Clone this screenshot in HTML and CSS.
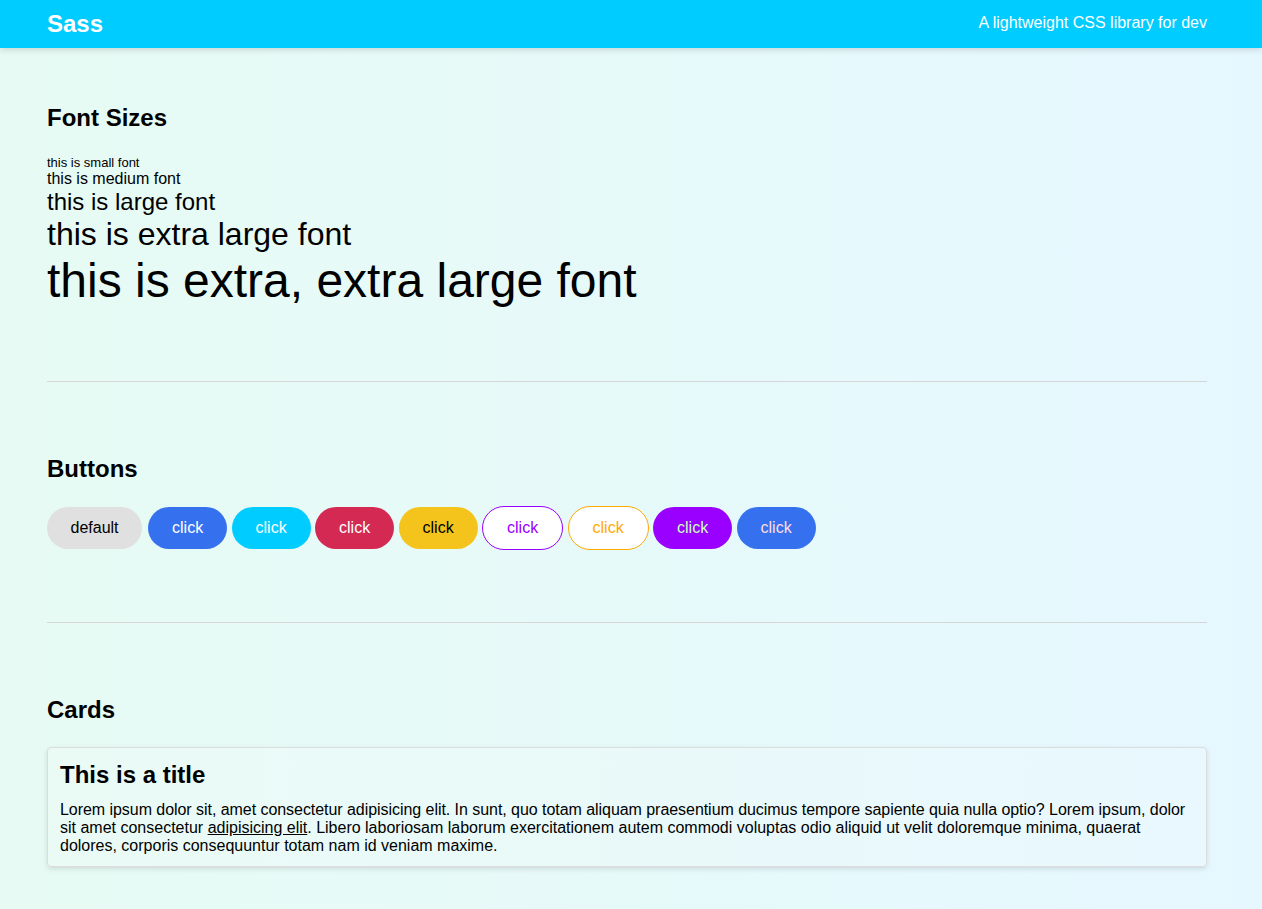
FILE: index.html
```html
<!DOCTYPE html>
<html lang="en">
<head>
<meta charset="utf-8">
<title>Sass</title>
<link rel="stylesheet" href="styles.css">
</head>
<body>
<header class="topbar">
  <div class="container topbar-inner">
    <div class="brand">Sass</div>
    <div class="tagline">A lightweight CSS library for dev</div>
  </div>
</header>
<main class="container">
  <section class="section section-first">
    <h2 class="section-title">Font Sizes</h2>
    <p class="fs fs-sm">this is small font</p>
    <p class="fs fs-md">this is medium font</p>
    <p class="fs fs-lg">this is large font</p>
    <p class="fs fs-xl">this is extra large font</p>
    <p class="fs fs-xxl">this is extra, extra large font</p>
  </section>
  <hr class="divider">
  <section class="section">
    <h2 class="section-title">Buttons</h2>
    <div class="btn-row">
      <button class="btn btn-default">default</button>
      <button class="btn btn-blue">click</button>
      <button class="btn btn-cyan">click</button>
      <button class="btn btn-red">click</button>
      <button class="btn btn-yellow">click</button>
      <button class="btn btn-outline btn-outline-purple">click</button>
      <button class="btn btn-outline btn-outline-orange">click</button>
      <button class="btn btn-purple">click</button>
      <button class="btn btn-blue btn-pinktext">click</button>
    </div>
  </section>
  <hr class="divider">
  <section class="section section-last">
    <h2 class="section-title">Cards</h2>
    <div class="card">
      <h3 class="card-title">This is a title</h3>
      <p class="card-text">Lorem ipsum dolor sit, amet consectetur adipisicing elit. In sunt, quo totam aliquam praesentium ducimus tempore sapiente quia nulla optio? Lorem ipsum, dolor sit amet consectetur <u>adipisicing elit</u>. Libero laboriosam laborum exercitationem autem commodi voluptas odio aliquid ut velit doloremque minima, quaerat dolores, corporis consequuntur totam nam id veniam maxime.</p>
    </div>
  </section>
</main>
</body>
</html>
```
FILE: styles.css
```css
* { box-sizing: border-box; }
html, body { margin: 0; padding: 0; }
body {
  font-family: "Liberation Sans", Arial, sans-serif;
  color: #000;
  min-height: 909px;
  background: linear-gradient(90deg, #e7fbf4 0%, #e6f8ff 100%);
}
.container {
  width: 1160px;
  margin-left: 47px;
}
.topbar {
  background: #00ccff;
  height: 48px;
  box-shadow: 0 2px 6px rgba(0, 0, 0, 0.14);
  position: relative;
}
.topbar-inner {
  height: 48px;
  display: flex;
  align-items: center;
  justify-content: space-between;
}
.brand {
  color: #fff;
  font-weight: bold;
  font-size: 24px;
  margin-top: -1px;
}
.tagline {
  color: #fff;
  font-size: 16px;
  margin-top: -2px;
}
.section { padding: 72px 0 72px; }
.section-first { padding-top: 55px; padding-bottom: 73px; }
.section-title {
  margin: 1px 0 23px;
  font-size: 24px;
  line-height: 28px;
  font-weight: bold;
}
.fs { margin: 0; line-height: normal; }
.fs-sm { font-size: 13px; }
.fs-md { font-size: 16px; }
.fs-lg { font-size: 24px; }
.fs-xl { font-size: 32px; }
.fs-xxl { font-size: 48px; }
.divider {
  margin: 0;
  border: 0;
  border-top: 1px solid #d6d6d6;
}
.btn-row {
  display: flex;
  align-items: center;
  gap: 4.4px;
}
.btn {
  display: block;
  font-family: "Liberation Sans", Arial, sans-serif;
  font-size: 16px;
  padding: 0 24px;
  border-radius: 21px;
  border: 0;
  margin: 0;
  cursor: pointer;
  box-sizing: content-box;
  height: 42px;
}
.btn-default { background: #e0e0e0; color: #000; margin-right: 1.6px; padding: 0 23.5px; }
.btn-blue { background: #3571ee; color: #fff; }
.btn-cyan { background: #00ccff; color: #fff; }
.btn-red { background: #d42953; color: #fff; }
.btn-yellow { background: #f5c41c; color: #000; }
.btn-outline { background: #fff; border: 1px solid; border-radius: 22px; }
.btn-outline-purple { color: #9900ff; border-color: #9900ff; }
.btn-outline-orange { color: #ffaa00; border-color: #ffaa00; }
.btn-purple { background: #9900ff; color: #ccffbb; }
.btn-pinktext { color: #ffdde4; }
.card {
  background: rgba(255, 255, 255, 0.12);
  border: 1px solid #dcdcdc;
  border-radius: 4px;
  box-shadow: 0 2px 5px rgba(0, 0, 0, 0.12);
  padding: 13px 12px 11px;
}
.card-title {
  margin: 0 0 12px;
  font-size: 24px;
  line-height: 28px;
  font-weight: bold;
}
.card-text {
  margin: 0;
  font-size: 16px;
  line-height: 18px;
}
.card-text::first-line { letter-spacing: -0.05px; }
```
